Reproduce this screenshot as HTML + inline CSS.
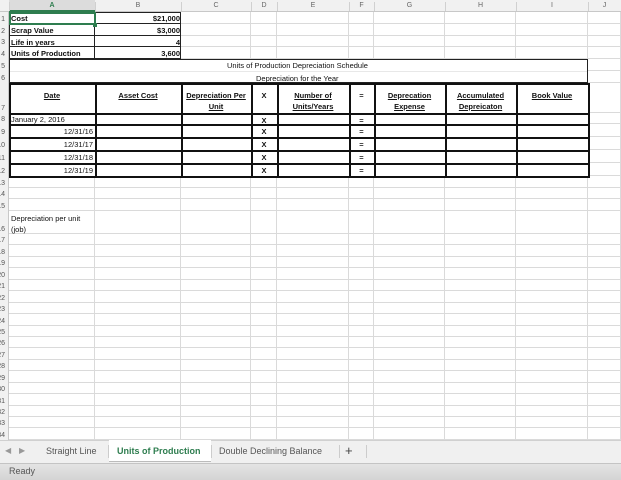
<!DOCTYPE html>
<html><head><meta charset="utf-8"><style>
*{margin:0;padding:0;box-sizing:border-box}
body{width:621px;height:480px;overflow:hidden;background:#fff;font-family:"Liberation Sans",sans-serif;position:relative}
.a{position:absolute}
.t{position:absolute;font-size:7.5px;color:#111;white-space:nowrap;line-height:1}
.b{font-weight:bold}
.u{text-decoration:underline}
</style></head><body>
<div id="g"></div>
<script>
var C=[9,95,181,251,277,349,374,445,516,588,621];
var R=[12,24,36,47,59,71,83,113,124,137,150,163,176,188,199,211,234];
for(var i=1;i<=18;i++)R.push(Math.round(234+i*11.44));
var h='';
function d(x,y,w,hh,s){h+='<div class="a" style="left:'+x+'px;top:'+y+'px;width:'+w+'px;height:'+hh+'px;'+s+'"></div>';}
function t(x,y,s,c,st){h+='<div class="t '+(c||'')+'" style="left:'+x+'px;top:'+y+'px;'+(st||'')+'">'+s+'</div>';}
d(0,0,621,12,'background:#f1f1f1;border-bottom:1px solid #c8c8c8');
d(9,0,86,12,'background:#dcdcdc;border-bottom:2px solid #2e7d4f');
var L='ABCDEFGHIJ';
for(var i=0;i<10;i++){d(C[i],2,1,9,'background:#d0d0d0');h+='<div class="t" style="left:'+C[i]+'px;width:'+(C[i+1]-C[i])+'px;text-align:center;top:2px;font-size:7px;color:'+(i==0?'#2e7d4f;font-weight:bold':'#666')+'">'+L[i]+'</div>';}
d(0,12,9,428,'background:#f1f1f1;border-right:1px solid #c8c8c8');
for(var i=1;i<R.length;i++){d(9,R[i]-1,612,1,'background:#dadada');}
for(var i=1;i<C.length;i++){d(C[i]-1,12,1,428,'background:#dadada');}
for(var i=1;i<R.length;i++){var yy=R[i]-8;h+='<div class="t" style="left:-8px;width:13px;text-align:right;top:'+yy+'px;font-size:7px;color:#555">'+i+'</div>';}
d(9,59,579,24,'background:#fff;border:1px solid #222');
d(10,71,577,1,'background:#e8e8e8');
for(var r=0;r<4;r++){d(9,R[r]+(r==0?1:0),86,R[r+1]-R[r],'border:1px solid #222;border-top:'+(r==0?'1px':'0')+' solid #222');d(95,R[r],86,R[r+1]-R[r],'border:1px solid #222;border-left:0;'+(r==0?'':'border-top:0'));}
d(9,12,87,13,'border:2px solid #2e7d4f');d(93,23,4,4,'background:#2e7d4f');
d(9,83,579,93,'background:#fff');
for(var r=7;r<=12;r++){for(var c=0;c<9;c++){d(C[c],R[r-1],C[c+1]-C[c]+2,R[r]-R[r-1]+2,'border:2px solid #111');}}
var lab=['Cost','Scrap Value','Life in years','Units of Production'];
for(var i=0;i<4;i++)t(11,R[i]+3,lab[i],'b');
var v=['$21,000','$3,000','4','3,600'];
for(var i=0;i<4;i++)h+='<div class="t b" style="left:95px;width:85px;text-align:right;top:'+(R[i]+3)+'px">'+v[i]+'</div>';
t(227,62,'Units of Production Depreciation Schedule');
t(256,75,'Depreciation for the Year');
function ct(c,y,s,cl){h+='<div class="t '+cl+'" style="left:'+C[c]+'px;width:'+(C[c+1]-C[c])+'px;text-align:center;top:'+y+'px">'+s+'</div>';}
ct(0,92,'Date','b u');ct(1,92,'Asset Cost','b u');ct(2,92,'Depreciation Per','b u');ct(2,103,'Unit','b u');ct(3,92,'X','b');
ct(4,92,'Number of','b u');ct(4,103,'Units/Years','b u');ct(5,92,'=','b');
ct(6,92,'Deprecation','b u');ct(6,103,'Expense','b u');ct(7,92,'Accumulated','b u');ct(7,103,'Depreicaton','b u');ct(8,92,'Book Value','b u');
t(11,116,'January 2, 2016');
var ds=['12/31/16','12/31/17','12/31/18','12/31/19'];
for(var i=0;i<4;i++)h+='<div class="t" style="left:9px;width:84px;text-align:right;top:'+(R[8+i]+4)+'px">'+ds[i]+'</div>';
for(var r=7;r<12;r++){ct(3,R[r]+3.5,'X','b');ct(5,R[r]+3.5,'=','b');}
d(9,213,85,20,'background:#fff');
t(11,215,'Depreciation per unit');t(11,226,'(job)');
d(0,440,621,23,'background:#f0f0f0;border-top:1px solid #d0d0d0');
h+='<div class="t" style="left:5px;top:447px;font-size:8px;color:#999">&#9664;</div><div class="t" style="left:19px;top:447px;font-size:8px;color:#999">&#9654;</div>';
d(109,440,102,22,'background:#fff;border-bottom:1px solid #bbb');
d(108,445,1,13,'background:#ccc');d(211,445,1,13,'background:#ccc');d(339,445,1,13,'background:#ccc');d(366,445,1,13,'background:#ccc');
t(46,447,'Straight Line','','font-size:9px;color:#555');
t(117,447,'Units of Production','b','font-size:9px;color:#2e7d4f');
t(219,447,'Double Declining Balance','','font-size:9px;color:#555');
t(345,444,'+','','font-size:13px;color:#444');
d(0,463,621,17,'background:linear-gradient(#e4e4e4,#d4d4d4);border-top:1px solid #c4c4c4');
t(9,467,'Ready','','font-size:9px;color:#555');
document.getElementById('g').innerHTML=h;
</script>
</body></html>
